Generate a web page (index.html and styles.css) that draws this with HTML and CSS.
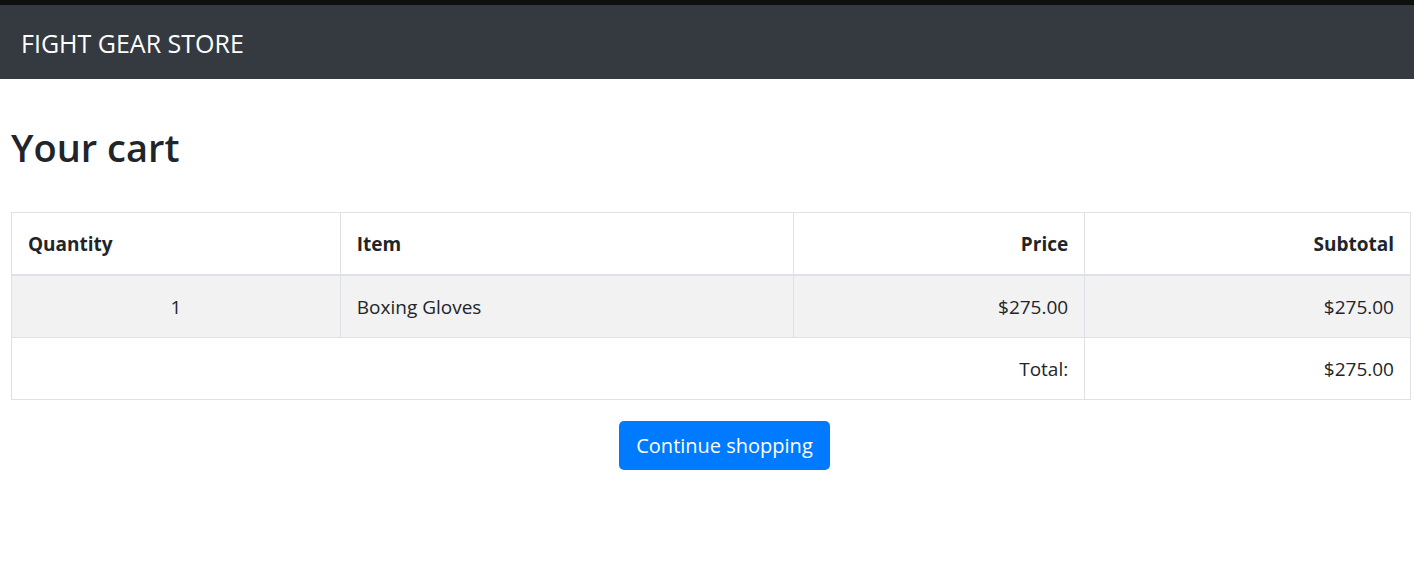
FILE: index.html
```html
<!DOCTYPE html>
<html lang="en">
<head>
<meta charset="utf-8">
<title>Your cart</title>
<link rel="stylesheet" href="styles.css">
</head>
<body>
<div class="topstrip"></div>
<nav class="navbar">
  <a class="brand" href="#">FIGHT GEAR STORE</a>
</nav>
<main class="content">
  <h1 class="title">Your cart</h1>
  <table class="cart">
    <thead>
      <tr>
        <th class="c-qty">Quantity</th>
        <th class="c-item">Item</th>
        <th class="c-price num">Price</th>
        <th class="c-sub num">Subtotal</th>
      </tr>
    </thead>
    <tbody>
      <tr class="striped">
        <td class="center">1</td>
        <td>Boxing Gloves</td>
        <td class="num">$275.00</td>
        <td class="num">$275.00</td>
      </tr>
    </tbody>
    <tfoot>
      <tr>
        <td colspan="3" class="num">Total:</td>
        <td class="num">$275.00</td>
      </tr>
    </tfoot>
  </table>
  <div class="actions">
    <a class="btn" href="#">Continue shopping</a>
  </div>
</main>
</body>
</html>
```

FILE: styles.css
```css
* { box-sizing: border-box; }
html, body { margin: 0; padding: 0; }
body {
  font-family: "Open Sans", "Noto Sans", sans-serif;
  color: #212529;
  background: #fff;
  font-size: 20px;
  line-height: 1.5;
}
.topstrip { height: 5px; background: #0e1010; }
.navbar {
  background: #343a40;
  height: 74px;
  display: flex;
  align-items: center;
  padding: 2px 21px 0;
}
.brand {
  color: #fff;
  text-decoration: none;
  font-size: 25px;
  line-height: 30px;
}
.content { padding: 0 3px 0 11px; }
.title {
  margin: 0;
  padding-top: 46px;
  font-size: 38px;
  font-weight: 600;
  line-height: 1.2;
  height: 133px;
}
.cart {
  width: 1400px;
  border-collapse: collapse;
  font-size: 19px;
}
.cart th, .cart td {
  border: 1px solid #dee2e6;
  padding: 16px 16px 15px;
  line-height: 30px;
  text-align: left;
  font-weight: 400;
}
.cart th { font-weight: 700; }
.cart thead th { border-bottom: 2px solid #dee2e6; }
.c-qty { width: 329px; }
.c-item { width: 454px; }
.c-price { width: 291px; }
.c-sub { width: 326px; }
.cart .num { text-align: right; }
.cart .center { text-align: center; }
.striped td { background: #f2f2f2; }
.actions {
  display: flex;
  justify-content: center;
  padding: 21px 0 0 27px;
}
.btn {
  display: inline-block;
  background: #007bff;
  color: #fff;
  text-decoration: none;
  font-size: 20px;
  line-height: 30px;
  padding: 10px 16px 9px;
  border-radius: 5px;
  width: 211px;
  text-align: center;
  white-space: nowrap;
}
```
